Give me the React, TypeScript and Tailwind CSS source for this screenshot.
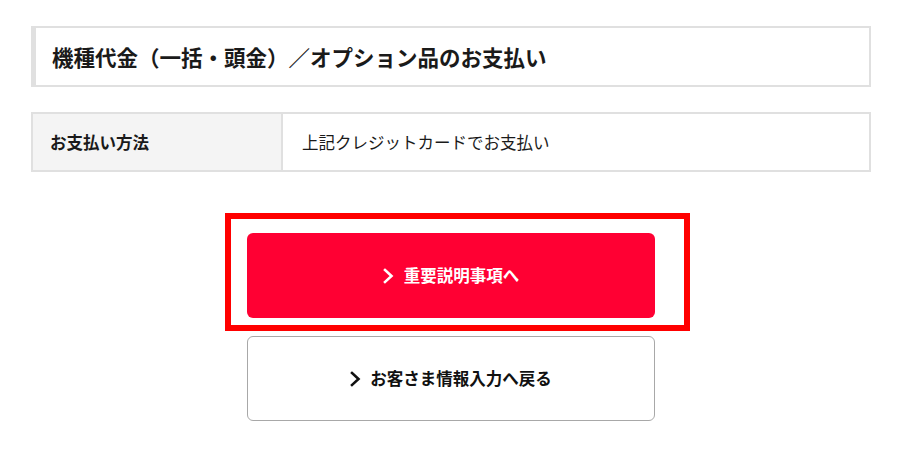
import React from 'react';

const font = { fontFamily: '"Noto Sans CJK JP", "Noto Sans", sans-serif' };

function Chevron({ color }: { color: string }) {
  return (
    <svg width="11" height="16" viewBox="0 0 11 16" fill="none" className="shrink-0">
      <polyline points="2,2 8.5,8 2,14" stroke={color} strokeWidth="2.6" strokeLinecap="square" />
    </svg>
  );
}

export default function App() {
  return (
    <div className="w-[900px] h-[455px] bg-white text-[#1a1a1a]" style={font}>
      <div className="pl-[31px] pt-[26px] w-[871px]">
        {/* Section title */}
        <div className="h-[61px] flex items-center border-2 border-l-[5px] border-[#e0e0e0] pl-[16px]">
          <h2 className="text-[21.5px] font-bold leading-none">
            機種代金（一括・頭金）／オプション品のお支払い
          </h2>
        </div>

        {/* Payment table */}
        <div className="mt-[25px] h-[60px] flex border-2 border-[#e0e0e0]">
          <div className="w-[250px] bg-[#f4f4f4] border-r-2 border-[#e0e0e0] flex items-center pl-[17px]">
            <span className="text-[16.5px] font-bold">お支払い方法</span>
          </div>
          <div className="flex-1 flex items-center pl-[19px]">
            <span className="text-[16.5px]">上記クレジットカードでお支払い</span>
          </div>
        </div>

        {/* Buttons */}
        <div className="mt-[61px] flex flex-col items-center">
          <div className="relative">
            <button className="w-[408px] h-[85px] rounded-[6px] bg-[#ff0033] text-white flex items-center justify-center gap-[10px]">
              <Chevron color="#ffffff" />
              <span className="text-[16.5px] font-bold">重要説明事項へ</span>
            </button>
            <div className="absolute left-[-22px] top-[-20px] w-[465px] h-[118px] border-[6px] border-[#ff0000] pointer-events-none" />
          </div>
          <button className="mt-[18px] w-[408px] h-[85px] rounded-[6px] bg-white border border-[#a8a8a8] text-[#111] flex items-center justify-center gap-[9px]">
            <Chevron color="#111111" />
            <span className="text-[16.5px] font-bold">お客さま情報入力へ戻る</span>
          </button>
        </div>
      </div>
    </div>
  );
}
